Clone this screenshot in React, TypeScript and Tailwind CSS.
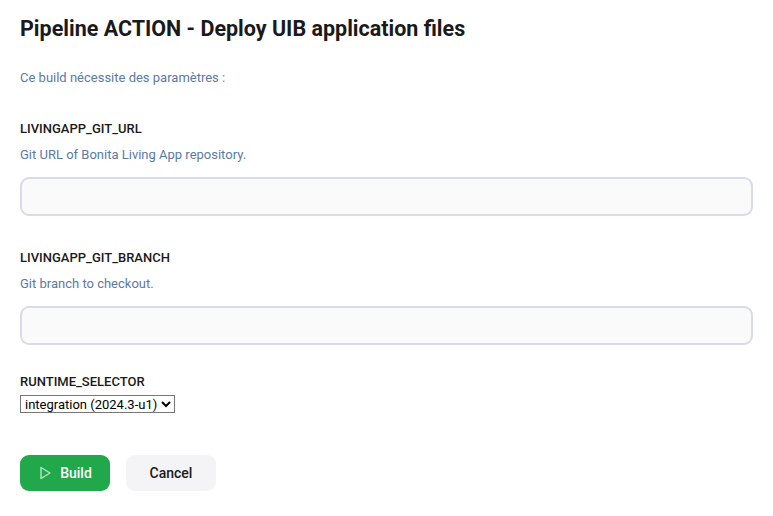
import React from "react";

function Field({ name, help }: { name: string; help: string }) {
    return (
        <div className="mt-[33px]">
            <p className="text-[13px] font-medium text-[#1a1a1a] leading-[18px]">{name}</p>
            <p className="text-[13px] text-[#5b7aa3] leading-[18px] mt-[8px]">{help}</p>
            <input className="mt-[13px] w-full h-[39px] rounded-[9px] border-2 border-[#d9dce6] bg-[#fafafb] px-3 outline-none" />
        </div>
    );
}

export default function App() {
    return (
        <div className="px-[20px] pt-[16px] font-[Roboto,sans-serif] text-[#1a1a1a] bg-white min-h-[516px]">
            <h1 className="text-[21.5px] font-bold leading-[26px]">
                Pipeline ACTION - Deploy UIB application files
            </h1>
            <p className="text-[13px] text-[#5b7aa3] mt-[27px] leading-[18px]">
                Ce build nécessite des paramètres :
            </p>
            <Field name="LIVINGAPP_GIT_URL" help="Git URL of Bonita Living App repository." />
            <div className="mt-[4px]">
                <Field name="LIVINGAPP_GIT_BRANCH" help="Git branch to checkout." />
            </div>
            <p className="text-[13px] font-medium leading-[18px] mt-[28px]">RUNTIME_SELECTOR</p>
            <select className="mt-[4px] h-[18px] border border-[#767676] text-[13px] leading-[16px] bg-white text-black">
                <option>integration (2024.3-u1)</option>
            </select>
            <div className="flex gap-[16px] mt-[39px]">
                <button className="h-[36px] w-[90px] rounded-[9px] bg-[#21a84b] text-white text-[14px] font-medium flex items-center justify-center gap-[8px]">
                    <svg width="14" height="14" viewBox="0 0 14 14" fill="none" stroke="#b9e6c6" strokeWidth="1.4" strokeLinejoin="round">
                        <path d="M3 1.5 L12 7 L3 12.5 Z" />
                    </svg>
                    Build
                </button>
                <button className="h-[36px] w-[90px] rounded-[9px] bg-[#f4f4f6] text-[#1a1a1a] text-[14px] font-medium">
                    Cancel
                </button>
            </div>
        </div>
    );
}
